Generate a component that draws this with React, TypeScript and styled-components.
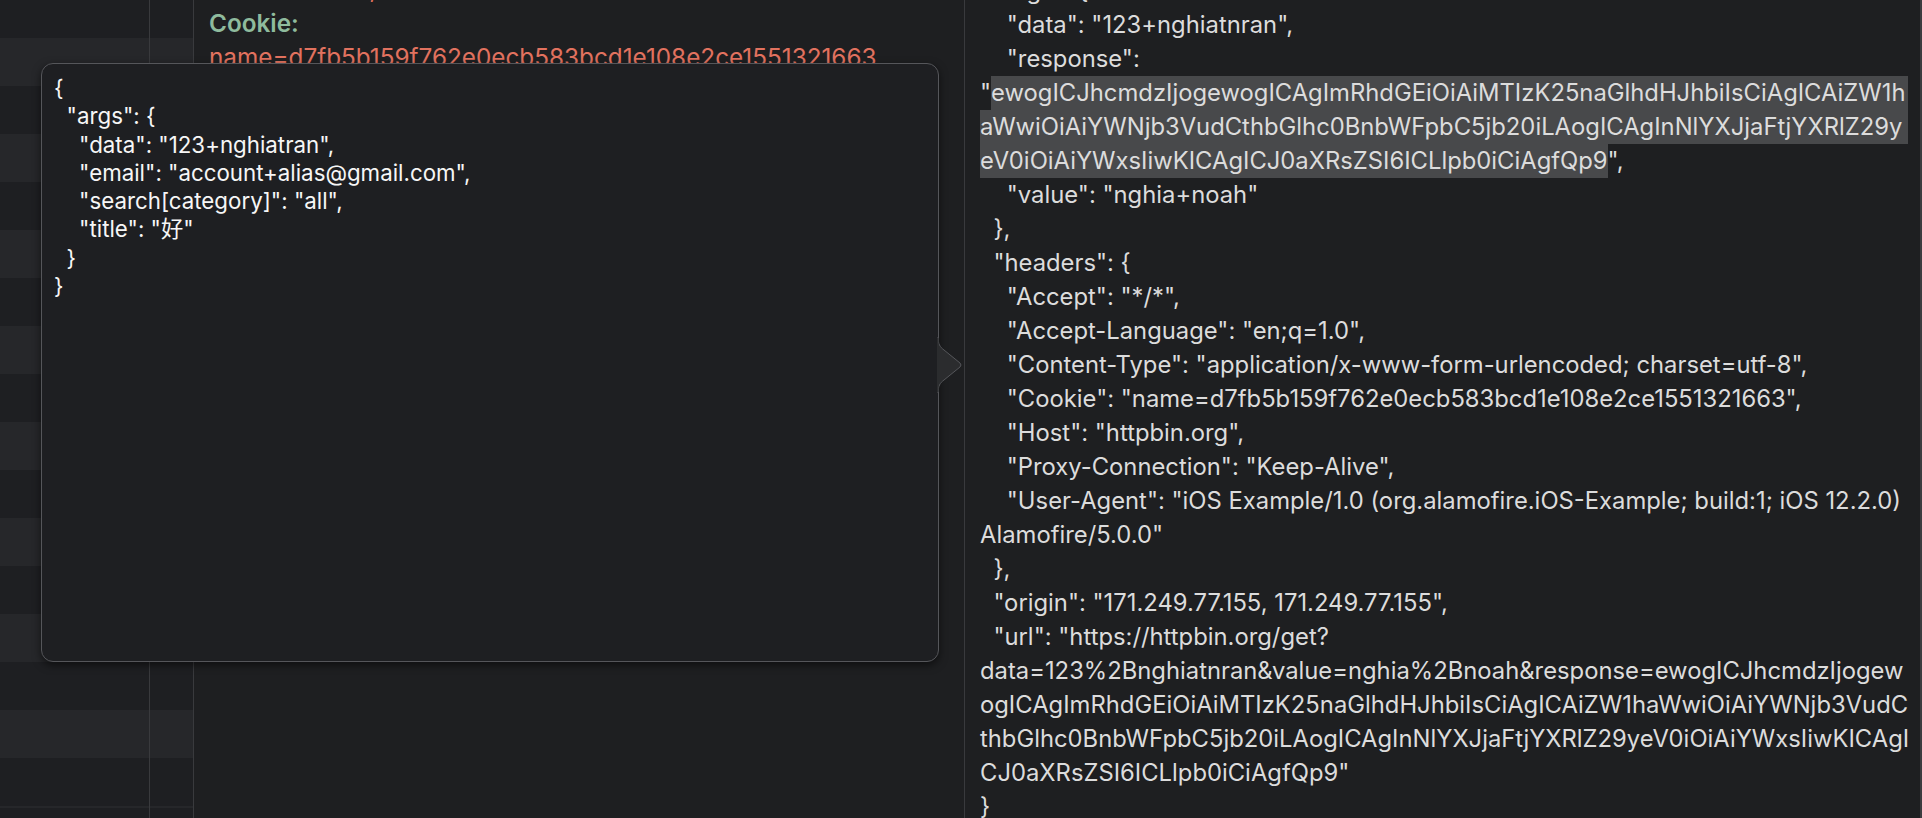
import React from "react";
import styled, { createGlobalStyle } from "styled-components";

const GlobalStyle = createGlobalStyle`
  html, body {
    margin: 0;
    padding: 0;
    background: #1e1f21;
    overflow: hidden;
  }
`;

const Window = styled.div`
  position: relative;
  display: flex;
  width: 1922px;
  height: 818px;
  overflow: hidden;
  background: #1e1f21;
  font-family: Inter, "Noto Sans", "Noto Sans CJK SC", sans-serif;
`;

const Striped = styled.div<{ $width: number }>`
  flex: 0 0 ${(p) => p.$width}px;
  border-right: 1px solid #393a3d;
  background: repeating-linear-gradient(
    to bottom,
    #1e1f22 0,
    #1e1f22 48px,
    #26272a 48px,
    #26272a 96px
  );
  background-position: 0 -10px;
`;

const Middle = styled.div`
  flex: 1;
  padding: 0 15px;
  overflow: hidden;
  font-size: 24.3px;
`;

const Scroll = styled.div<{ $offset: number }>`
  margin-top: ${(p) => -p.$offset}px;
`;

const Line = styled.div<{ $h?: number }>`
  display: flex;
  height: ${(p) => p.$h ?? 34}px;
  line-height: ${(p) => p.$h ?? 34}px;
  white-space: pre;
`;

const Label = styled.span`
  color: #8fbb9d;
  font-weight: 600;
`;

const Value = styled.span`
  color: #e2725f;
`;

const RightPanel = styled.div`
  flex: 0 0 958px;
  box-sizing: border-box;
  border-left: 1px solid #393a3d;
  border-right: 2px solid #3b3c3f;
  padding: 0 12px 0 15px;
  overflow: hidden;
  font-size: 23.8px;
  color: #dcdcdc;
`;

const Sel = styled.span<{ $fill?: boolean }>`
  background: #48494b;
  ${(p) => (p.$fill ? "flex: 1;" : "")}
`;

const Popover = styled.div`
  position: absolute;
  left: 41px;
  top: 63px;
  width: 898px;
  height: 599px;
  box-sizing: border-box;
  padding: 10px 12px;
  border: 1px solid #55565a;
  border-radius: 12px;
  background: #1e1f22;
  box-shadow: 0 3px 8px rgba(0, 0, 0, 0.55);
  color: #f6f6f6;
  font-size: 22.3px;
`;

const Arrow = styled.svg`
  position: absolute;
  right: -26px;
  top: 273px;
`;

const PopoverArrow = () => (
  <Arrow width="27" height="56" viewBox="0 0 27 56">
    <path
      d="M1 0 C1 7 3 10 7 13 L23 26 Q25 28 23 30 L7 43 C3 46 1 49 1 56"
      fill="#2b2c2e"
      stroke="#55565a"
      strokeWidth="1"
    />
    <rect x="0" y="1" width="1.5" height="54" fill="#2b2c2e" />
  </Arrow>
);

const argsJson = [
  "{",
  '  "args": {',
  '    "data": "123+nghiatran",',
  '    "email": "account+alias@gmail.com",',
  '    "search[category]": "all",',
  '    "title": "好"',
  "  }",
  "}",
];

const App: React.FC = () => {
  return (
    <>
      <GlobalStyle />
      <Window>
        <Striped $width={149} />
        <Striped $width={43} />
        <Middle>
          <Scroll $offset={28}>
            <Line>
              <Value>171.249.77.155, 171.249.77.155</Value>
            </Line>
            <Line>
              <Label>Cookie:</Label>
            </Line>
            <Line>
              <Value>name=d7fb5b159f762e0ecb583bcd1e108e2ce1551321663</Value>
            </Line>
          </Scroll>
        </Middle>
        <RightPanel>
          <Scroll $offset={26}>
            <Line>{'  "args": {'}</Line>
            <Line>{'    "data": "123+nghiatnran",'}</Line>
            <Line>{'    "response":'}</Line>
            <Line>
              {'"'}
              <Sel $fill>ewogICJhcmdzIjogewogICAgImRhdGEiOiAiMTIzK25naGlhdHJhbiIsCiAgICAiZW1h</Sel>
            </Line>
            <Line>
              <Sel $fill>aWwiOiAiYWNjb3VudCthbGlhc0BnbWFpbC5jb20iLAogICAgInNlYXJjaFtjYXRlZ29y</Sel>
            </Line>
            <Line>
              <Sel>eV0iOiAiYWxsIiwKICAgICJ0aXRsZSI6ICLlpb0iCiAgfQp9</Sel>
              {'",'}
            </Line>
            <Line>{'    "value": "nghia+noah"'}</Line>
            <Line>{"  },"}</Line>
            <Line>{'  "headers": {'}</Line>
            <Line>{'    "Accept": "*/*",'}</Line>
            <Line>{'    "Accept-Language": "en;q=1.0",'}</Line>
            <Line>{'    "Content-Type": "application/x-www-form-urlencoded; charset=utf-8",'}</Line>
            <Line>{'    "Cookie": "name=d7fb5b159f762e0ecb583bcd1e108e2ce1551321663",'}</Line>
            <Line>{'    "Host": "httpbin.org",'}</Line>
            <Line>{'    "Proxy-Connection": "Keep-Alive",'}</Line>
            <Line>{'    "User-Agent": "iOS Example/1.0 (org.alamofire.iOS-Example; build:1; iOS 12.2.0)'}</Line>
            <Line>{'Alamofire/5.0.0"'}</Line>
            <Line>{"  },"}</Line>
            <Line>{'  "origin": "171.249.77.155, 171.249.77.155",'}</Line>
            <Line>{'  "url": "https://httpbin.org/get?'}</Line>
            <Line>data=123%2Bnghiatnran&amp;value=nghia%2Bnoah&amp;response=ewogICJhcmdzIjogew</Line>
            <Line>ogICAgImRhdGEiOiAiMTIzK25naGlhdHJhbiIsCiAgICAiZW1haWwiOiAiYWNjb3VudC</Line>
            <Line>thbGlhc0BnbWFpbC5jb20iLAogICAgInNlYXJjaFtjYXRlZ29yeV0iOiAiYWxsIiwKICAgI</Line>
            <Line>{'CJ0aXRsZSI6ICLlpb0iCiAgfQp9"'}</Line>
            <Line>{"}"}</Line>
          </Scroll>
        </RightPanel>
        <Popover>
          {argsJson.map((l, i) => (
            <Line key={i} $h={28.3}>
              {l}
            </Line>
          ))}
          <PopoverArrow />
        </Popover>
      </Window>
    </>
  );
};

export default App;
